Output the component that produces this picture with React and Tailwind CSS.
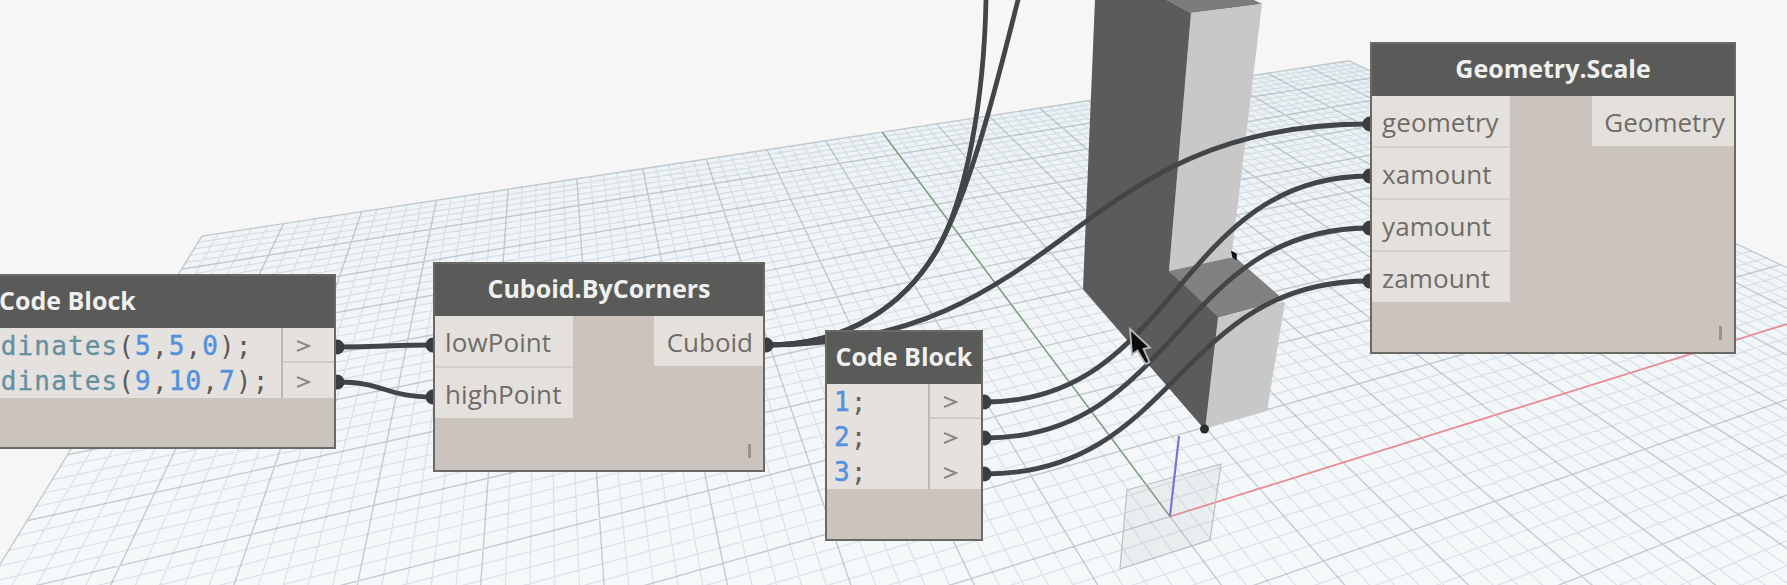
import React from "react";

// Projects a point of the ground plane (in major grid units) onto the canvas.
function project(u, v) {
  const w = 0.0344 * u + 0.085 * v + 1;
  const x = (132.8 * u + 46.2 * v + 1170) / w;
  const y = (-11.1 * u - 27.2 * v + 516.5) / w;
  return x.toFixed(1) + " " + y.toFixed(1);
}

const FRONT = -5;
const BACK = 10;
const SIDE = 10;

function gridPath(major) {
  let d = "";
  for (let i = -SIDE * 5; i <= SIDE * 5; i++) {
    if ((i % 5 === 0) !== major) continue;
    d += `M${project(i / 5, FRONT)}L${project(i / 5, BACK)}`;
  }
  for (let i = FRONT * 5; i <= BACK * 5; i++) {
    if ((i % 5 === 0) !== major) continue;
    d += `M${project(-SIDE, i / 5)}L${project(SIDE, i / 5)}`;
  }
  return d;
}

const MINOR = gridPath(false);
const MAJOR = gridPath(true);
const GROUND = `M${project(-SIDE, FRONT)}L${project(-SIDE, BACK)}L${project(SIDE, BACK)}L${project(SIDE, FRONT)}Z`;

function wire(x1, y1, x2, y2) {
  const c = (x2 - x1) / 2;
  return `M${x1} ${y1}C${x1 + c} ${y1} ${x2 - c} ${y2} ${x2} ${y2}`;
}

const WIRES = [
  wire(337, 347, 433, 345),
  wire(337, 382, 433, 397),
  wire(767, 345, 1369, 124),
  wire(985, 402, 1369, 176),
  wire(985, 438, 1369, 228),
  wire(985, 474, 1369, 281),
  "M767 345C850 345 906 303 937 250C966 200 984 100 986 0V-4",
  "M767 345C850 345 906 303 937 250C972 188 998 78 1018 0V-4",
];

const ENDS = [
  [337, 347], [337, 382], [433, 345], [433, 397], [766, 345],
  [984, 402], [984, 438], [984, 474],
  [1370, 124], [1370, 176], [1370, 228], [1370, 281],
];

function Scene() {
  return (
    <svg className="absolute inset-0" width="1787" height="585" viewBox="0 0 1787 585" fill="none">
      <defs>
        <linearGradient id="ground" x1="0" y1="60" x2="0" y2="585" gradientUnits="userSpaceOnUse">
          <stop offset="0" stopColor="#e9f0f4" />
          <stop offset="0.4" stopColor="#f1f5f8" />
          <stop offset="1" stopColor="#f6f9fa" />
        </linearGradient>
      </defs>
      <path d={GROUND} fill="url(#ground)" />
      <path d={MINOR} stroke="#a3b4be" strokeOpacity="0.32" strokeWidth="1.2" />
      <path d={MAJOR} stroke="#8a979d" strokeOpacity="0.45" strokeWidth="1.4" />
      <path d={`M${project(0, 0)}L${project(0, BACK)}`} stroke="#7fa183" strokeWidth="1.5" />
      <path d={`M${project(0, 0)}L${project(SIDE, 0)}`} stroke="#ee8a92" strokeWidth="1.7" />
      <path d="M1127 490L1221 464L1210 540L1120 569Z" fill="#9aa3a3" fillOpacity="0.12" stroke="#b9bfbf" strokeWidth="1.2" />
      <path d="M1179 436L1170 516" stroke="#7476d8" strokeWidth="2.2" />

      <path d="M1165 -1H1252L1262 4L1191 13Z" fill="#7c7c7c" />
      <path d="M1191 13L1262 4L1231 260L1169 272Z" fill="#c8c8c8" />
      <path d="M1169 271L1229 258H1236L1284 300L1217 318Z" fill="#818181" />
      <path d="M1217 318L1276 303L1285 302L1267 411L1204 429Z" fill="#c8c8c8" />
      <path d="M1095 -1H1165L1191 13L1169 271L1218 317L1205 430L1083 289Z" fill="#5b5b5b" />
      <path d="M1232 252l4 2v5l-3-2z" fill="#111" stroke="#111" strokeWidth="1.5" />
      <circle cx="1204.5" cy="429" r="4.5" fill="#2a2d2e" />
    </svg>
  );
}

function Wires() {
  return (
    <svg className="absolute inset-0" width="1787" height="585" viewBox="0 0 1787 585" fill="none">
      <g stroke="#434648" strokeWidth="4.800">
        {WIRES.map((d) => (
          <path key={d} d={d} />
        ))}
      </g>
      {ENDS.map(([x, y]) => (
        <circle key={x + "-" + y} cx={x} cy={y} r="7.5" fill="#3a3d3f" />
      ))}
    </svg>
  );
}

function Cursor() {
  return (
    <svg className="absolute left-[1128px] top-[327px]" width="28" height="42" viewBox="0 0 28 42">
      <path d="M2 2L4 27.500L9.500 23.500L17.500 37L21.500 35L15.500 22L22 20.500Z" fill="#0c0c0c" stroke="#b9b9b9" strokeWidth="1.800" />
    </svg>
  );
}

function Node({ place, title, titleClass = "justify-center", children, mark }) {
  return (
    <section className={`absolute flex flex-col border-2 border-[#6a6966] bg-[#cbc4be] ${place}`}>
      <header className={`flex h-[52px] shrink-0 items-center bg-[#5a5a58] pb-[2px] text-[25px] font-bold whitespace-nowrap text-[#f0f0ee] ${titleClass}`}>
        {title}
      </header>
      {children}
      {mark && <i className="mt-auto mr-[12px] mb-[12px] h-[14px] w-[3px] self-end bg-[#99928d]" />}
    </section>
  );
}

function Ports({ inputs, output, outputClass }) {
  return (
    <div className="flex items-start justify-between text-[26px]">
      <ul className="flex w-[138px] flex-col gap-[2px] bg-[#d3cfca]">
        {inputs.map((name) => (
          <li key={name} className="flex h-[50px] items-center bg-[#e4e0dc] pt-[2px] pl-[10px] tracking-[0.1px]">{name}</li>
        ))}
      </ul>
      <div className={`flex h-[50px] items-center justify-end bg-[#e4e0dc] pt-[2px] ${outputClass}`}>{output}</div>
    </div>
  );
}

function Code({ lines, arrows, pad }) {
  return (
    <div className="flex bg-[#e4e1de]">
      <div className={`flex grow flex-col overflow-hidden font-['DejaVu_Sans_Mono',monospace] text-[26px] leading-[35px] tracking-[1.13px] ${pad}`}>
        {lines}
      </div>
      <ul className="flex w-[53px] shrink-0 flex-col border-l-2 border-[#bdb9b6]">
        {arrows.map((line, i) => (
          <li key={i} className={`flex h-[35px] items-center justify-center pt-[2px] pr-[10px] text-[#8a8886] ${line ? "border-b-2 border-[#cfcbc8]" : ""}`}>
            <svg width="15" height="12" viewBox="0 0 15 12" fill="none" stroke="currentColor" strokeWidth="2">
              <path d="M1 1L13 6L1 11" />
            </svg>
          </li>
        ))}
      </ul>
    </div>
  );
}

const Fn = ({ children }) => (
  <span className="text-[#6590a0] [-webkit-text-stroke:0.3px_#6590a0]">{children}</span>
);
const Num = ({ children }) => (
  <span className="text-[#5590dc] [-webkit-text-stroke:0.5px_#5590dc]">{children}</span>
);

export default function App() {
  return (
    <main className="relative h-[585px] w-[1787px] overflow-hidden bg-[#f6f6f6] font-['Open_Sans',sans-serif] text-[#6f6c6a]">
      <Scene />
      <Wires />

      <Node place="-left-[140px] top-[274px] h-[175px] w-[476px]" title="Code Block" titleClass="pl-[137px]">
        <Code
          pad="pl-[122px] pt-[1px] text-[#5d5a58]"
          arrows={[true, false]}
          lines={
            <>
              <div className="h-[34.500px] whitespace-pre"><Fn>rdinates</Fn>(<Num>5</Num>,<Num>5</Num>,<Num>0</Num>);</div>
              <div className="h-[34.500px] whitespace-pre"><Fn>rdinates</Fn>(<Num>9</Num>,<Num>10</Num>,<Num>7</Num>);</div>
            </>
          }
        />
      </Node>

      <Node place="left-[433px] top-[262px] h-[210px] w-[332px]" title="Cuboid.ByCorners" mark>
        <Ports inputs={["lowPoint", "highPoint"]} output="Cuboid" outputClass="w-[109px] pr-[10px]" />
      </Node>

      <Node place="left-[825px] top-[330px] h-[211px] w-[158px]" title="Code Block">
        <Code
          pad="pl-[7px] pt-[1px] text-[#6a625c]"
          arrows={[true, false, false]}
          lines={
            <>
              <div><Num>1</Num>;</div>
              <div><Num>2</Num>;</div>
              <div className="h-[34px]"><Num>3</Num>;</div>
            </>
          }
        />
      </Node>

      <Node place="left-[1370px] top-[42px] h-[312px] w-[366px]" title="Geometry.Scale" mark>
        <Ports inputs={["geometry", "xamount", "yamount", "zamount"]} output="Geometry" outputClass="w-[142px] pr-[9px]" />
      </Node>

      <Cursor />
    </main>
  );
}
